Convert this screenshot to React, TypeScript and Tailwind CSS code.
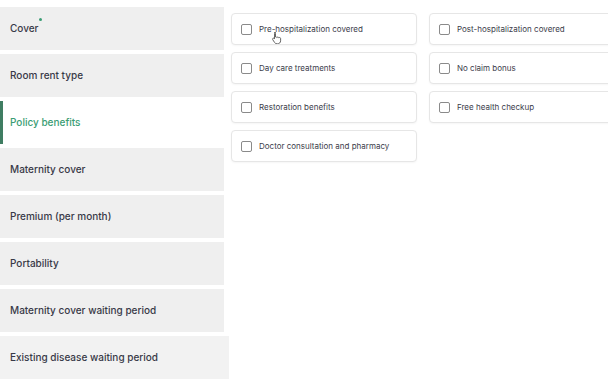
import React from "react";

const sections = [
  "Cover",
  "Room rent type",
  "Policy benefits",
  "Maternity cover",
  "Premium (per month)",
  "Portability",
  "Maternity cover waiting period",
  "Existing disease waiting period",
];

const benefits = [
  "Pre-hospitalization covered",
  "Post-hospitalization covered",
  "Day care treatments",
  "No claim bonus",
  "Restoration benefits",
  "Free health checkup",
  "Doctor consultation and pharmacy",
];

function Cursor() {
  return (
    <svg width="12" height="13" viewBox="0 0 12 13" className="absolute left-[271px] top-[31px]">
      <path
        d="M3.5 1.5c.6 0 1 .4 1 1V6l.4-.1c.5 0 .9.3 1 .7.2-.3.5-.5.9-.5.5 0 .9.3 1 .7.2-.2.5-.3.8-.3.6 0 1 .5 1 1v2.3c0 1.7-1.3 3-3 3H6c-1 0-1.9-.5-2.4-1.3L1.7 8.6c-.3-.5-.2-1 .2-1.3.4-.3 1-.2 1.3.2l.3.4V2.5c0-.6.4-1 1-1z"
        fill="#fff"
        stroke="#555"
        strokeWidth="0.9"
      />
    </svg>
  );
}

export default function App() {
  return (
    <div
      className="relative flex h-[380px] w-[608px] overflow-hidden bg-white"
      style={{ fontFamily: "Inter, 'Noto Sans', sans-serif" }}
    >
      <div className="flex w-[229px] shrink-0 flex-col gap-[4px] pt-[7px]">
        {sections.map((label, i) => {
          const active = label === "Policy benefits";
          const last = i === sections.length - 1;
          return (
            <div
              key={label}
              className={`relative flex h-[43px] shrink-0 items-center pl-[10px] text-[10px] font-medium ${
                active
                  ? "w-[224px] bg-white text-[#3a9d74]"
                  : last
                    ? "w-[229px] bg-[#f2f2f2] text-[#383947]"
                    : "w-[224px] bg-[#efefef] text-[#383947]"
              }`}
            >
              {active && <span className="absolute left-0 top-0 h-full w-[3px] bg-[#3f7d62]" />}
              <span className="relative">
                {label}
                {i === 0 && (
                  <span className="absolute -right-[4px] -top-[3px] h-[3px] w-[3px] rounded-full bg-[#3a9d74]" />
                )}
              </span>
            </div>
          );
        })}
      </div>

      <div className="grid grid-cols-[186px_186px] content-start gap-x-[12px] gap-y-[7px] pl-[2px] pt-[13px]">
        {benefits.map((b) => (
          <div
            key={b}
            className="flex h-[32px] items-center gap-[7px] rounded-[4px] border border-[#e6e6e6] bg-white pl-[9px] shadow-[0_1px_2px_rgba(0,0,0,0.04)]"
          >
            <span className="h-[11px] w-[11px] shrink-0 rounded-[2px] border border-[#8a8a8a] bg-white" />
            <span className="whitespace-nowrap text-[8px] text-[#3b3c4a]">{b}</span>
          </div>
        ))}
      </div>

      <Cursor />
    </div>
  );
}
